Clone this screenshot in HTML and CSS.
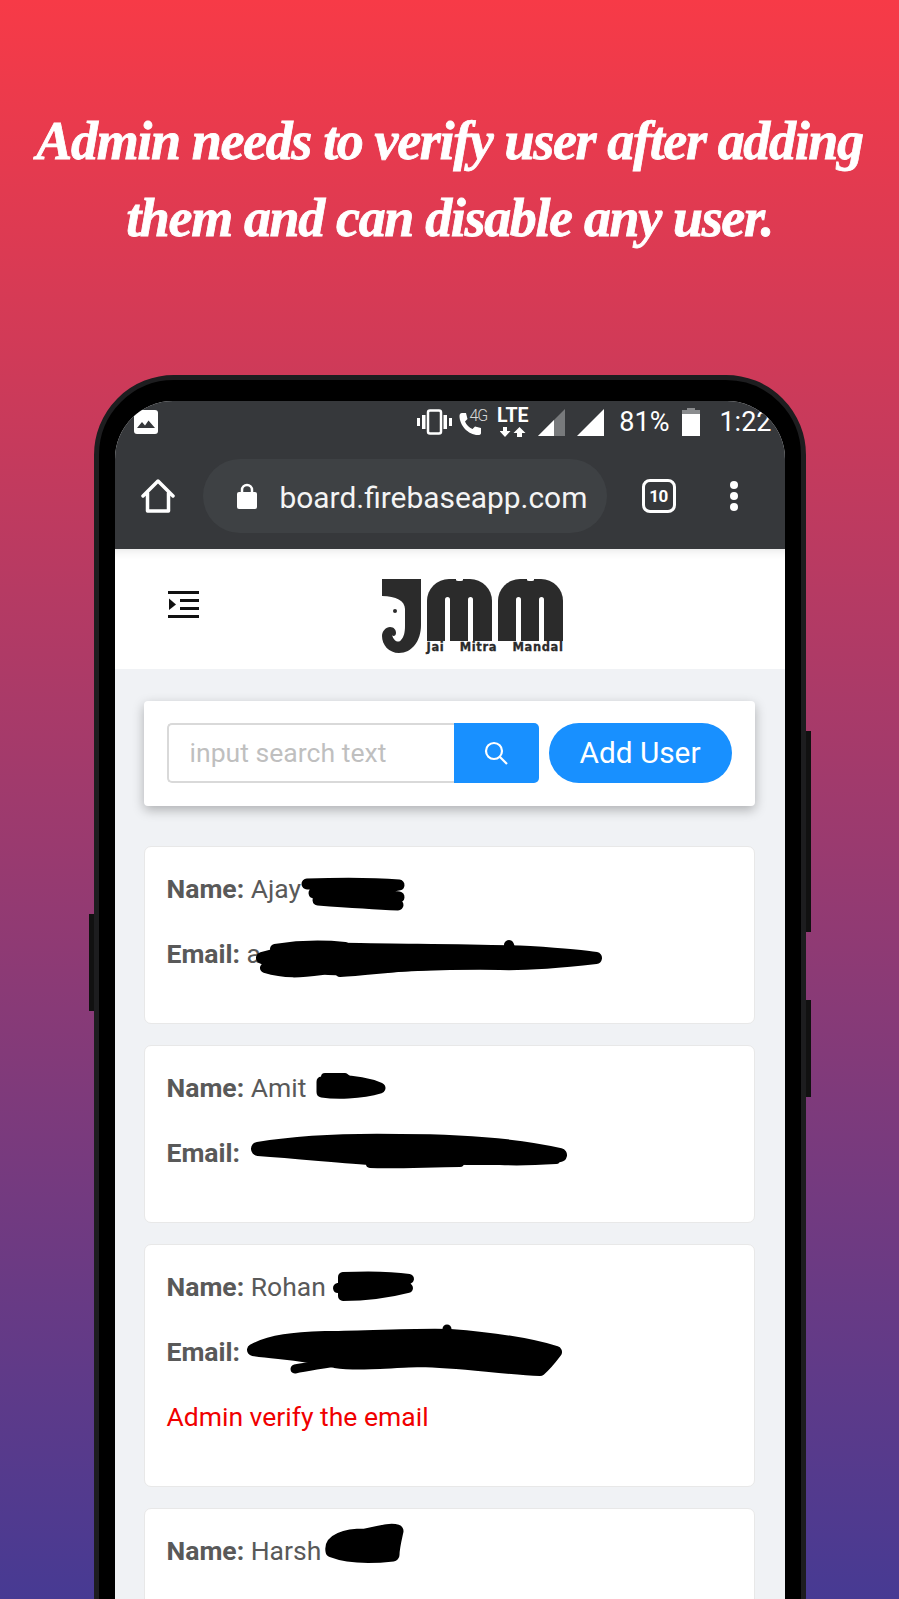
FILE: index.html
```html
<!DOCTYPE html>
<html lang="en">
<head>
    <meta charset="UTF-8">
    <meta name="viewport" content="width=device-width, initial-scale=1.0">
    <title>Admin verify user</title>
    <link rel="stylesheet" href="styles.css">
</head>
<body>
    <h1 class="headline">Admin needs to verify user after adding<br>them and can disable any user.</h1>

    <div class="phone">
        <span class="side-btn side-left"></span>
        <span class="side-btn side-right-a"></span>
        <span class="side-btn side-right-b"></span>

        <div class="screen">
            <div class="chrome">
                <div class="status">
                    <svg class="ic-image" viewBox="0 0 24 24"><rect width="24" height="24" rx="3" fill="#fff"/><path d="M3 18l5-6 3 3.500 3.500-5 6.500 7.500z" fill="#36383b"/></svg>
                    <div class="status-right">
                        <svg class="ic-vibrate" viewBox="0 0 35 26"><rect x="11" y="1.500" width="13" height="23" rx="2" fill="none" stroke="#fff" stroke-width="2.500"/><path d="M0 9h3v8H0zM5 6h3.500v14H5zM26.500 6H30v14h-3.500zM32 9h3v8h-3z" fill="#fff"/></svg>
                        <div class="call">
                            <svg class="ic-call" viewBox="0 0 24 24"><path d="M4 1h4l1.500 6L7 9.500C8.500 13 11 15.500 14.500 17l2.500-2.500 6 1.500v5c0 1.500-1 2-3 2C10 23 1.500 13 1.500 4c0-2 1-3 2.500-3z" fill="#fff"/></svg>
                            <span class="call-4g">4G</span>
                        </div>
                        <div class="lte">
                            <span class="lte-text">LTE</span>
                            <svg class="ic-arrows" viewBox="0 0 26 10"><path d="M3 0h4v4h3.500L5 10-.5 4H3zM19.500 0L25.500 6H22v4h-5V6h-3.500z" fill="#fff"/></svg>
                        </div>
                        <svg class="ic-signal" viewBox="0 0 27 27"><path d="M0 27L27 0v27z" fill="#787a7c"/><path d="M0 27L16 11v16z" fill="#fff"/></svg>
                        <svg class="ic-signal sig-full" viewBox="0 0 27 27"><path d="M0 27L27 0v27z" fill="#fff"/></svg>
                        <span class="status-text pct">81%</span>
                        <svg class="ic-battery" viewBox="0 0 18 28"><path d="M5 0h8v2h5v5H0V2h5z" fill="#8a8c8e"/><path d="M0 6h18v22H0z" fill="#fff"/></svg>
                        <span class="status-text clock">1:22</span>
                    </div>
                </div>
                <div class="toolbar">
                    <svg class="ic-home" viewBox="0 0 34 34" fill="none" stroke="#fff" stroke-width="3.500" stroke-linejoin="round" stroke-linecap="round"><path d="M2 17L17 2l15 15M6.500 14v18h21V14"/></svg>
                    <div class="url-pill">
                        <svg class="ic-lock" viewBox="0 0 20 26"><path d="M5 11V7a5 5 0 0 1 10 0v4" fill="none" stroke="#fff" stroke-width="2.500"/><rect y="9" width="20" height="17" rx="2" fill="#fff"/></svg>
                        <span class="url-text">board.firebaseapp.com</span>
                    </div>
                    <div class="tab-count">10</div>
                    <div class="dots"><span></span><span></span><span></span></div>
                </div>
            </div>

            <header class="site-header">
                <svg class="ic-menu" viewBox="0 0 31 28"><path d="M0 0h31v3H0zM12 8h19v3H12zM12 16h19v3H12zM0 24h31v3H0z" fill="#111"/><path d="M1 7.500l7 6-7 5.500z" fill="#111"/></svg>
                <div class="logo">
                    <svg class="logo-j" viewBox="0 0 39 74"><path d="M0 0h39v46c0 16-9 28-22 28C7 74 0 66 0 57c0-5 4-9 8-9s6 3 6 6-3 4-4 2c2 7 7 8 9 5 3-3 4-8 4-14V30C23 22 14 17 0 17z" fill="#2b2b2b"/><circle cx="13" cy="32" r="2" fill="#2b2b2b"/></svg>
                    <div class="logo-right">
                        <div class="logo-ms">
                            <div class="logo-m"><span></span><span></span></div>
                            <div class="logo-m"><span></span><span></span></div>
                        </div>
                        <div class="logo-caption"><span>Jai</span><span>Mitra</span><span>Mandal</span></div>
                    </div>
                </div>
            </header>

            <main class="content">
                <div class="search-card">
                    <div class="search-input">input search text</div>
                    <div class="search-btn">
                        <svg viewBox="0 0 24 24" fill="none" stroke="#fff" stroke-width="2.200"><circle cx="10" cy="10" r="8"/><path d="M16 16l7 7"/></svg>
                    </div>
                    <div class="add-btn">Add User</div>
                </div>

                <div class="user-card">
                    <p><b>Name:</b> Ajay</p>
                    <p><b>Email:</b> a</p>
                </div>
                <div class="user-card">
                    <p><b>Name:</b> Amit</p>
                    <p><b>Email:</b></p>
                </div>
                <div class="user-card">
                    <p><b>Name:</b> Rohan</p>
                    <p><b>Email:</b></p>
                    <p class="warn">Admin verify the email</p>
                </div>
                <div class="user-card">
                    <p><b>Name:</b> Harsh</p>
                </div>
            </main>

            <!-- marker scribbles over the private details, page coordinates -->
            <svg class="scribbles" viewBox="115 401 670 1198" fill="#000" stroke="#000" stroke-linecap="round" stroke-linejoin="round">
                <path stroke-width="11" fill="none" d="M307 884C335 883 375 883 399 885C375 891 340 889 314 893C345 893 375 894 399 897C380 899 345 897 318 900C345 902 375 904 398 905"/>
                <path stroke-width="12" d="M262 958C290 950 325 948 360 949C420 950 480 950 530 952C560 954 585 956 596 958C560 962 530 965 500 964C440 963 390 966 345 969C320 971 290 965 262 958z"/>
                <path stroke-width="10" fill="none" d="M275 949C300 945 325 945 345 947M510 948L509 945M265 968C285 974 300 973 322 970M340 972C370 970 400 966 430 965"/>
                <path stroke-width="11" d="M322 1082C345 1079 365 1082 380 1088C360 1094 335 1094 322 1092z"/>
                <path stroke-width="8" d="M325 1077L345 1077L355 1085L325 1092z"/>
                <path stroke-width="14" d="M258 1149C300 1142 345 1140 400 1141C460 1141 520 1146 560 1155C520 1160 470 1157 420 1158C380 1161 340 1155 258 1149z"/>
                <path stroke-width="8" fill="none" d="M370 1164C400 1165 430 1163 460 1163M500 1161C520 1162 540 1161 556 1160"/>
                <path stroke-width="10" d="M343 1277C365 1276 390 1276 409 1279C390 1285 365 1284 338 1288C360 1287 390 1286 408 1288C385 1294 360 1296 343 1296z"/>
                <path stroke-width="12" d="M253 1350C270 1340 295 1338 325 1337C360 1337 410 1334 450 1335C490 1338 530 1344 556 1352C550 1360 545 1366 540 1370C500 1368 460 1362 420 1361C380 1363 355 1365 335 1362C300 1354 280 1354 253 1350z"/>
                <path stroke-width="9" fill="none" d="M295 1369C310 1366 325 1364 345 1360M447 1333L447 1329"/>
                <path stroke-width="13" d="M332 1551C330 1540 345 1535 365 1535C380 1532 390 1529 397 1531C395 1540 393 1548 393 1555C375 1557 350 1558 332 1551z"/>
            </svg>
        </div>
    </div>
</body>
</html>
```

FILE: styles.css
```css
* {
    box-sizing: border-box;
}
body {
    margin: 0;
    height: 1599px;
    overflow: hidden;
    font-family: Roboto, sans-serif;
    background: linear-gradient(180deg, #f73a47 0%, #473a93 100%);
}
.headline {
    margin: 0;
    padding-top: 103px;
    text-align: center;
    color: #fff;
    font-family: "Liberation Serif", serif;
    font-style: italic;
    font-weight: 700;
    font-size: 54px;
    line-height: 77px;
    letter-spacing: -1.35px;
    white-space: nowrap;
    -webkit-text-stroke: 0.8px #fff;
}

/* phone */
.phone {
    position: relative;
    width: 712px;
    height: 1300px;
    margin: 118px auto 0;
    padding: 21px 15px 0 16px;
    background: #000;
    border: 5px solid #1d1d1f;
    border-radius: 80px;
}
.side-btn {
    position: absolute;
    width: 5px;
    background: #111;
}
.side-left {
    left: -10px;
    top: 534px;
    height: 97px;
}
.side-right-a {
    right: -10px;
    top: 351px;
    height: 201px;
}
.side-right-b {
    right: -10px;
    top: 620px;
    height: 97px;
}
.screen {
    position: relative;
    width: 670px;
    height: 1250px;
    overflow: hidden;
    border-radius: 58px 58px 0 0;
    background: #f0f2f5;
}

/* status bar and browser toolbar */
.chrome {
    background: #36383b;
    height: 148px;
}
.status {
    display: flex;
    align-items: center;
    height: 42px;
    padding: 0 13px 0 19px;
    color: #fff;
}
.ic-image {
    width: 24px;
    height: 24px;
}
.status-right {
    display: flex;
    align-items: center;
    margin-left: auto;
}
.ic-vibrate {
    width: 35px;
    height: 26px;
}
.call {
    position: relative;
    width: 28px;
    height: 28px;
    margin-left: 6px;
}
.ic-call {
    position: absolute;
    left: 0;
    bottom: 0;
    width: 24px;
    height: 24px;
}
.call-4g {
    position: absolute;
    right: -1px;
    top: 0;
    color: #d8d8d8;
    font-size: 16px;
    font-weight: 300;
    line-height: 16px;
    letter-spacing: -1px;
    background: #36383b;
}
.lte {
    display: flex;
    flex-direction: column;
    align-items: center;
    width: 33px;
    margin-left: 10px;
}
.lte-text {
    font-size: 19.5px;
    line-height: 16px;
    font-weight: 700;
}
.ic-arrows {
    width: 26px;
    height: 10px;
    margin-top: 3px;
}
.ic-signal {
    width: 27px;
    height: 27px;
    margin-left: 9px;
}
.sig-full {
    margin-left: 12px;
}
.status-text {
    font-size: 27px;
    line-height: 30px;
}
.pct {
    margin-left: 15px;
}
.ic-battery {
    width: 18px;
    height: 28px;
    margin-left: 13px;
}
.clock {
    margin-left: 19px;
}
.toolbar {
    display: flex;
    align-items: center;
    height: 106px;
    padding-left: 26px;
}
.ic-home {
    width: 34px;
    height: 34px;
}
.url-pill {
    display: flex;
    align-items: center;
    width: 404px;
    height: 74px;
    margin-left: 28px;
    padding-left: 34px;
    background: #3e4144;
    border-radius: 37px;
}
.ic-lock {
    width: 20px;
    height: 26px;
}
.url-text {
    margin: 2px 0 0 23px;
    color: #f4f4f4;
    font-size: 29.9px;
}
.tab-count {
    display: flex;
    align-items: center;
    justify-content: center;
    width: 34px;
    height: 34px;
    margin-left: 35px;
    border: 3.5px solid #fff;
    border-radius: 8px;
    color: #fff;
    font-size: 17px;
    font-weight: 700;
    letter-spacing: -0.5px;
}
.dots {
    display: flex;
    flex-direction: column;
    gap: 3px;
    margin-left: 54px;
}
.dots span {
    width: 8px;
    height: 8px;
    border-radius: 50%;
    background: #fff;
}

/* site header */
.site-header {
    position: relative;
    display: flex;
    align-items: flex-start;
    height: 120px;
    padding: 30px 0 0 53px;
    background: #fff;
    box-shadow: inset 0 10px 10px -8px rgba(0, 0, 0, 0.1);
}
.ic-menu {
    width: 31px;
    height: 28px;
    margin-top: 12px;
}
.logo {
    display: flex;
    margin-left: 183px;
}
.logo-j {
    width: 39px;
    height: 74px;
}
.logo-right {
    margin-left: 6px;
}
.logo-ms {
    display: flex;
    gap: 6px;
}
.logo-m {
    position: relative;
    display: flex;
    justify-content: center;
    gap: 18px;
    width: 65px;
    height: 62px;
    padding-top: 18px;
    background: #2b2b2b;
    border-radius: 22px 22px 0 0;
}
/* dip between the two humps */
.logo-m::before {
    content: "";
    position: absolute;
    left: 29px;
    top: 0;
    width: 7px;
    height: 2px;
    background: #fff;
    border-radius: 0 0 50% 50%;
}
.logo-m span {
    width: 5px;
    height: 44px;
    background: #fff;
    border-radius: 3px 3px 0 0;
}
.logo-caption {
    display: flex;
    justify-content: space-between;
    width: 137px;
    color: #2b2b2b;
    font-family: "DejaVu Sans", sans-serif;
    font-size: 11.5px;
    font-weight: 700;
    line-height: 13px;
    letter-spacing: 0.6px;
    -webkit-text-stroke: 0.3px #2b2b2b;
}

/* page content */
.content {
    padding: 32px 30px 0 29px;
}
.search-card {
    display: flex;
    height: 105px;
    margin-bottom: 40px;
    padding: 22px 22px 23px 23px;
    background: #fff;
    border-radius: 4px;
    box-shadow: 0 4px 12px rgba(0, 0, 0, 0.28);
}
.search-input {
    width: 287px;
    height: 60px;
    padding-left: 21px;
    border: 2px solid #d9d9d9;
    border-right: none;
    border-radius: 5px 0 0 5px;
    color: #bfbfbf;
    font-size: 26.6px;
    line-height: 56px;
}
.search-btn {
    display: flex;
    align-items: center;
    justify-content: center;
    width: 85px;
    height: 60px;
    background: #1890ff;
    border-radius: 0 5px 5px 0;
}
.search-btn svg {
    width: 24px;
    height: 24px;
}
.add-btn {
    width: 183px;
    height: 60px;
    margin-left: 10px;
    background: #1890ff;
    border-radius: 30px;
    color: #fff;
    font-size: 29.8px;
    line-height: 60px;
    text-align: center;
}
.user-card {
    margin-bottom: 21px;
    padding: 22px 22px 24px;
    background: #fff;
    border: 1px solid #e8e8e8;
    border-radius: 7px;
}
.user-card p {
    margin: 0 0 25px;
    color: #595959;
    font-size: 26.5px;
    line-height: 40px;
}
.user-card b {
    font-weight: 700;
}
.user-card .warn {
    color: #f00000;
}

/* scribbles sit over the whole screen */
.scribbles {
    position: absolute;
    left: 0;
    top: 0;
    width: 670px;
    height: 1198px;
}
```
